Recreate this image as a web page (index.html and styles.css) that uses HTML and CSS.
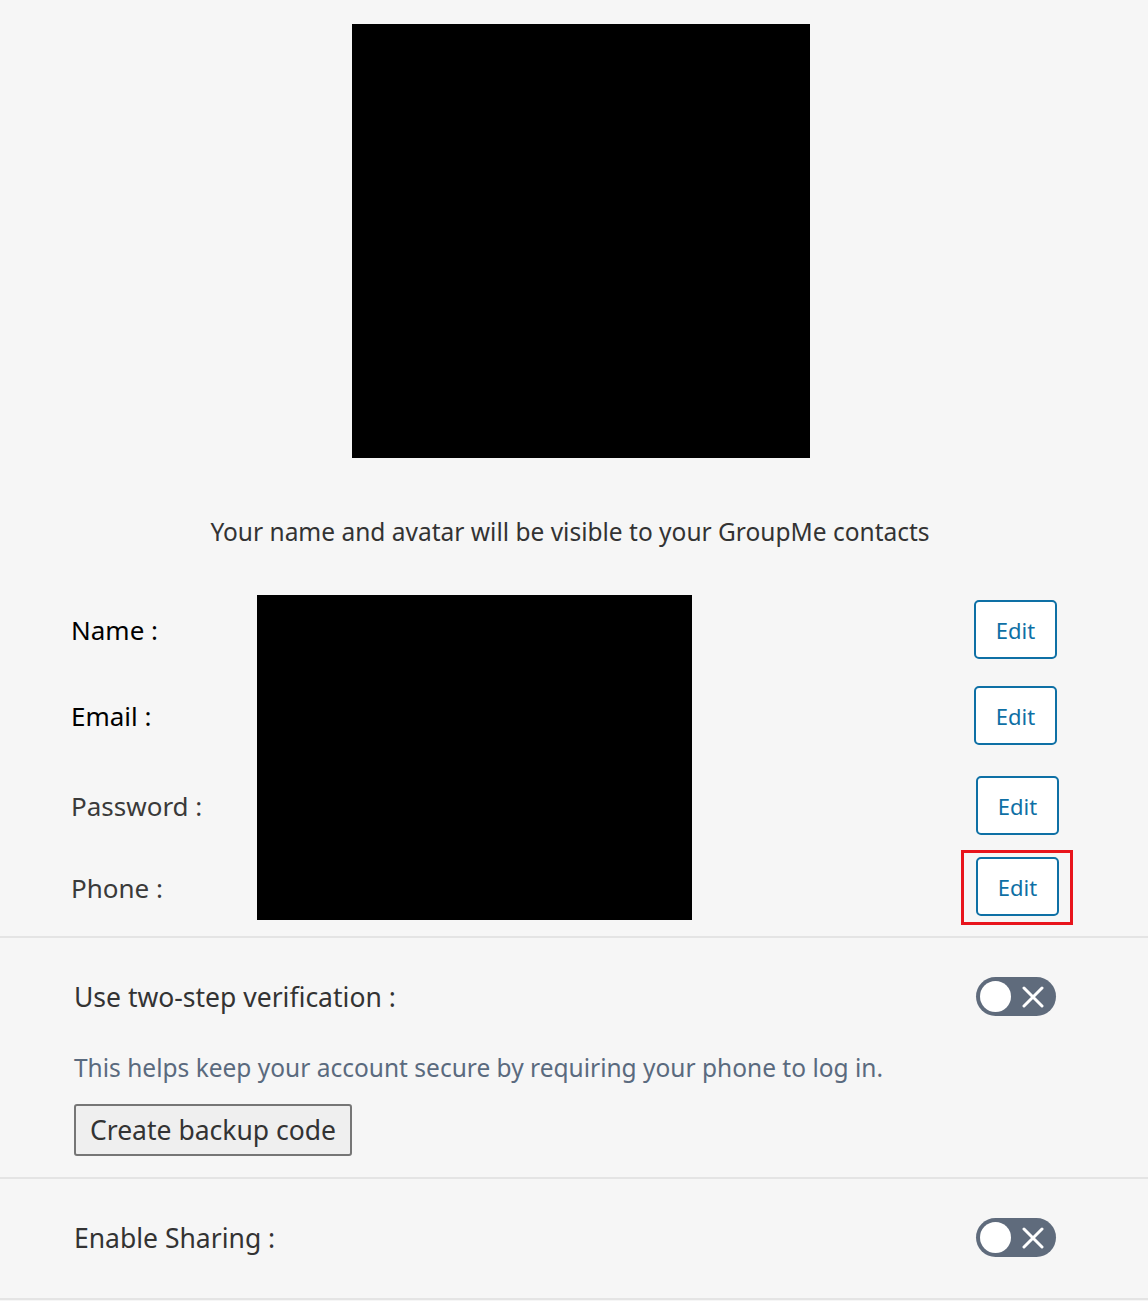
FILE: index.html
```html
<!DOCTYPE html>
<html lang="en">
<head>
    <meta charset="UTF-8">
    <title>Profile settings</title>
    <link rel="stylesheet" href="styles.css">
</head>
<body>
    <div class="profile-page">
        <div class="avatar-box"></div>
        <p class="avatar-note">Your name and avatar will be visible to your GroupMe contacts</p>

        <div class="details">
            <div class="redacted"></div>
            <div class="detail-row row-name">
                <span class="label dark">Name :</span>
                <button class="edit-button">Edit</button>
            </div>
            <div class="detail-row row-email">
                <span class="label dark">Email :</span>
                <button class="edit-button">Edit</button>
            </div>
            <div class="detail-row row-password">
                <span class="label">Password :</span>
                <button class="edit-button shifted">Edit</button>
            </div>
            <div class="detail-row row-phone">
                <span class="label">Phone :</span>
                <span class="highlight"><button class="edit-button">Edit</button></span>
            </div>
        </div>

        <div class="setting two-step">
            <div class="setting-head">
                <span class="setting-title">Use two-step verification :</span>
                <div class="toggle">
                    <span class="knob"></span>
                    <svg class="cross" width="22" height="22" viewBox="0 0 22 22"><path d="M2 2 L20 20 M20 2 L2 20" stroke="#fff" stroke-width="3" stroke-linecap="round"/></svg>
                </div>
            </div>
            <p class="setting-help">This helps keep your account secure by requiring your phone to log in.</p>
            <button class="backup-button">Create backup code</button>
        </div>

        <div class="setting sharing">
            <div class="setting-head">
                <span class="setting-title">Enable Sharing :</span>
                <div class="toggle">
                    <span class="knob"></span>
                    <svg class="cross" width="22" height="22" viewBox="0 0 22 22"><path d="M2 2 L20 20 M20 2 L2 20" stroke="#fff" stroke-width="3" stroke-linecap="round"/></svg>
                </div>
            </div>
        </div>
    </div>
</body>
</html>
```

FILE: styles.css
```css
body {
    margin: 0;
    padding: 0;
    background-color: #f6f6f6;
    font-family: "Noto Sans", "Open Sans", sans-serif;
    color: #333;
}

.profile-page {
    width: 1148px;
    padding-top: 24px;
}

.avatar-box {
    width: 458px;
    height: 434px;
    margin-left: 352px;
    background-color: #000;
}

.avatar-note {
    margin: 57px 0 0;
    text-align: center;
    font-size: 24.5px;
    line-height: 34px;
    color: #333;
    padding-right: 8px;
}

/* details rows with the redaction box over them */
.details {
    position: relative;
    padding: 51px 91px 11px 71px;
    border-bottom: 2px solid #e4e4e4;
}

.redacted {
    position: absolute;
    left: 257px;
    top: 46px;
    width: 435px;
    height: 325px;
    background-color: #000;
}

.detail-row {
    display: flex;
    align-items: center;
    justify-content: space-between;
}

.row-email { margin-top: 27px; }
.row-password { margin-top: 31px; }
.row-phone { margin-top: 15px; margin-right: -16px; }

.label {
    font-size: 26px;
    color: #3a3a3a;
}

.label.dark {
    color: #000;
}

.edit-button {
    width: 83px;
    height: 59px;
    background-color: #fff;
    border: 2px solid #0e70a5;
    border-radius: 5px;
    color: #0e70a5;
    font-family: "Noto Sans", "Open Sans", sans-serif;
    font-size: 22px;
    padding: 0;
    cursor: pointer;
}

.edit-button.shifted {
    margin-right: -2px;
}

.highlight {
    display: inline-block;
    padding: 4px 11px 6px 12px;
    border: 3px solid #e8141c;
}

.highlight .edit-button {
    display: block;
    height: 59px;
}

.setting {
    padding: 0 92px 0 74px;
    border-bottom: 2px solid #e4e4e4;
}

.setting-head {
    display: flex;
    align-items: center;
    justify-content: space-between;
}

.two-step {
    padding-top: 39px;
    padding-bottom: 21px;
}

.sharing {
    padding-top: 39px;
    padding-bottom: 41px;
}

.setting-title {
    font-size: 26.5px;
    color: #333;
}

.toggle {
    width: 80px;
    height: 39px;
    border-radius: 20px;
    background-color: #5f6b7c;
    display: flex;
    align-items: center;
    justify-content: space-between;
    padding: 0 12px 0 4px;
    box-sizing: border-box;
}

.knob {
    width: 31px;
    height: 31px;
    border-radius: 50%;
    background-color: #fff;
}

.setting-help {
    margin: 35px 0 0;
    font-size: 24.5px;
    color: #5a6a7e;
}

.backup-button {
    margin-top: 20px;
    width: 278px;
    height: 52px;
    background-color: #efefef;
    border: 2px solid #767676;
    border-radius: 3px;
    font-family: "Noto Sans", "Open Sans", sans-serif;
    font-size: 26.5px;
    color: #333;
    padding: 0;
}
```
